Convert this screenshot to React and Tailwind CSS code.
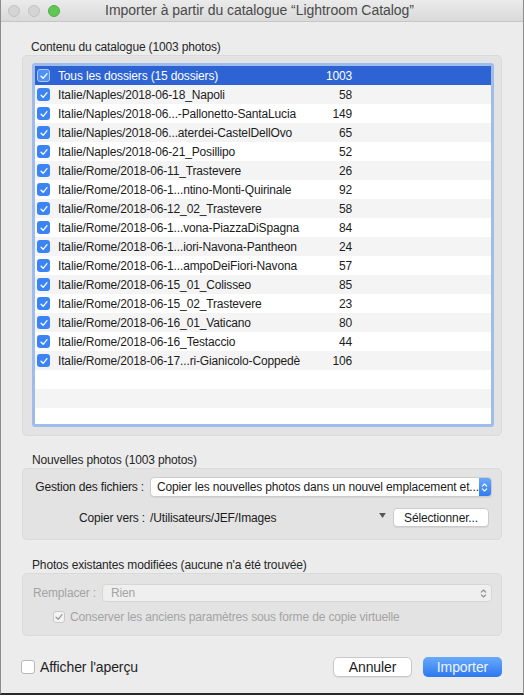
import React from 'react';

const rows = [
  ['Italie/Naples/2018-06-18_Napoli', 58],
  ['Italie/Naples/2018-06...-Pallonetto-SantaLucia', 149],
  ['Italie/Naples/2018-06...aterdei-CastelDellOvo', 65],
  ['Italie/Naples/2018-06-21_Posillipo', 52],
  ['Italie/Rome/2018-06-11_Trastevere', 26],
  ['Italie/Rome/2018-06-1...ntino-Monti-Quirinale', 92],
  ['Italie/Rome/2018-06-12_02_Trastevere', 58],
  ['Italie/Rome/2018-06-1...vona-PiazzaDiSpagna', 84],
  ['Italie/Rome/2018-06-1...iori-Navona-Pantheon', 24],
  ['Italie/Rome/2018-06-1...ampoDeiFiori-Navona', 57],
  ['Italie/Rome/2018-06-15_01_Colisseo', 85],
  ['Italie/Rome/2018-06-15_02_Trastevere', 23],
  ['Italie/Rome/2018-06-16_01_Vaticano', 80],
  ['Italie/Rome/2018-06-16_Testaccio', 44],
  ['Italie/Rome/2018-06-17...ri-Gianicolo-Coppedè', 106],
];

const Check = ({ color = 'white' }) => (
  <svg viewBox="0 0 12 12" className="w-[10px] h-[10px]">
    <path d="M2.5 6.3 L5 8.8 L9.6 3.2" fill="none" stroke={color} strokeWidth="1.6" strokeLinecap="round" strokeLinejoin="round" />
  </svg>
);

const RowBox = ({ selected }) => (
  <div
    className={`w-[13px] h-[13px] rounded-[3px] flex items-center justify-center shrink-0 ${
      selected ? 'bg-[#4e90f6] border border-[#a9c8fb]' : 'bg-[#3b84f6]'
    }`}
  >
    <Check />
  </div>
);

const Stepper = ({ color }) => (
  <svg viewBox="0 0 8 12" className="w-[7px] h-[11px]">
    <path d="M1.5 4.5 L4 2 L6.5 4.5 M1.5 7.5 L4 10 L6.5 7.5" fill="none" stroke={color} strokeWidth="1.3" strokeLinecap="round" strokeLinejoin="round" />
  </svg>
);

export default function App() {
  return (
    <div
      className="w-[524px] h-[697px] bg-white text-[12px] tracking-[-0.15px] text-[#1c1c1c]"
      style={{ fontFamily: '"Liberation Sans", Arial, sans-serif' }}
    >
      <div className="h-[695px] bg-[#ececec] border-l border-r border-[#8c8c8c] border-b-2 border-b-[#2a2a2a] flex flex-col">
        {/* title bar */}
        <div className="h-[22px] shrink-0 bg-gradient-to-b from-[#ebebeb] to-[#d9d9d9] border-b border-[#c6c6c6] flex items-center relative">
          <div className="flex items-center gap-[8px] pl-[7px]">
            <div className="w-[12px] h-[12px] rounded-full bg-[#d4d4d4] border border-[#c2c2c2]" />
            <div className="w-[12px] h-[12px] rounded-full bg-[#d4d4d4] border border-[#c2c2c2]" />
            <div className="w-[12px] h-[12px] rounded-full bg-[#62c655] border border-[#4fae44]" />
          </div>
          <div className="flex-1 text-center text-[14px] tracking-[-0.05px] text-[#4a4a4a] pr-[64px]">
            Importer à partir du catalogue “Lightroom Catalog”
          </div>
        </div>

        <div className="px-[21px]">
          {/* section 1 */}
          <div className="mt-[18px] h-[15px] leading-[15px] pl-[9px] text-[#262626]">Contenu du catalogue (1003 photos)</div>
          <div className="h-[381px] bg-[#e3e3e3] border border-[#dadada] rounded-[5px] pt-[7px] pl-[9px] pr-[7px]">
            <div className="h-[364px] border-[3px] border-[#9ebdec] rounded-[3px] bg-white overflow-hidden">
              <div className="h-[19px] bg-[#2d63d3] text-white flex items-center pl-[2px]">
                <RowBox selected />
                <span className="ml-[8px] w-[240px]">Tous les dossiers (15 dossiers)</span>
                <span className="w-[54px] text-right">1003</span>
              </div>
              {rows.map(([name, n], i) => (
                <div
                  key={name}
                  className={`h-[19px] flex items-center pl-[2px] ${i % 2 === 0 ? 'bg-[#f4f4f4]' : 'bg-white'}`}
                >
                  <RowBox />
                  <span className="ml-[8px] w-[240px] whitespace-nowrap">{name}</span>
                  <span className="w-[54px] text-right">{n}</span>
                </div>
              ))}
              <div className="h-[19px] bg-white" />
              <div className="h-[19px] bg-[#f4f4f4]" />
              <div className="h-[19px] bg-white" />
            </div>
          </div>

          {/* section 2 */}
          <div className="mt-[17px] h-[15px] leading-[15px] pl-[10px] text-[#262626]">Nouvelles photos (1003 photos)</div>
          <div className="h-[72px] bg-[#e3e3e3] border border-[#dadada] rounded-[5px] pt-[8px] pr-[9px]">
            <div className="flex items-center h-[20px]">
              <span className="w-[127px] text-right pr-[6px]">Gestion des fichiers :</span>
              <div className="flex-1 h-[20px] bg-white border border-[#cbcbcb] rounded-[4px] shadow-[0_1px_0_rgba(0,0,0,0.06)] flex items-center overflow-hidden">
                <span className="flex-1 pl-[6px] whitespace-nowrap">Copier les nouvelles photos dans un nouvel emplacement et...</span>
                <div className="w-[15px] h-full bg-gradient-to-b from-[#6aa8f9] to-[#2f7bf2] flex items-center justify-center">
                  <Stepper color="white" />
                </div>
              </div>
            </div>
            <div className="flex items-center h-[19px] mt-[11px]">
              <span className="w-[127px] text-right pr-[5px]">Copier vers :</span>
              <span className="flex-1">/Utilisateurs/JEF/Images</span>
              <svg viewBox="0 0 8 6" className="w-[7px] h-[5px] mr-[7px] mb-[4px]">
                <path d="M0 0 L8 0 L4 6 Z" fill="#555" />
              </svg>
              <div className="w-[96px] h-[19px] bg-white border border-[#cbcbcb] rounded-[4px] shadow-[0_1px_0_rgba(0,0,0,0.06)] flex items-center justify-center mr-[3px]">
                Sélectionner...
              </div>
            </div>
          </div>

          {/* section 3 */}
          <div className="mt-[18px] h-[15px] leading-[15px] pl-[10px] text-[#262626]">Photos existantes modifiées (aucune n'a été trouvée)</div>
          <div className="h-[63px] bg-[#e3e3e3] border border-[#dadada] rounded-[5px] pt-[10px] pr-[9px] text-[#a3a3a3]">
            <div className="flex items-center h-[18px]">
              <span className="w-[79px] text-right pr-[6px]">Remplacer :</span>
              <div className="flex-1 h-[18px] bg-[#efefef] border border-[#d6d6d6] rounded-[4px] flex items-center pr-[4px]">
                <span className="flex-1 pl-[8px]">Rien</span>
                <Stepper color="#8d8d8d" />
              </div>
            </div>
            <div className="flex items-center mt-[7px] pl-[30px] h-[16px]">
              <div className="w-[12px] h-[12px] rounded-[3px] bg-[#f3f3f3] border border-[#c9c9c9] flex items-center justify-center">
                <Check color="#9b9b9b" />
              </div>
              <span className="ml-[5px]">Conserver les anciens paramètres sous forme de copie virtuelle</span>
            </div>
          </div>

          {/* bottom */}
          <div className="mt-[21px] h-[20px] flex items-center text-[14px] tracking-[-0.1px]">
            <div className="w-[14px] h-[14px] rounded-[3px] bg-white border border-[#b9b9b9] -ml-[1px]" />
            <span className="ml-[5px] text-[#1f1f1f]">Afficher l'aperçu</span>
            <div className="flex-1" />
            <div className="w-[79px] h-[20px] bg-white border border-[#c8c8c8] rounded-[5px] shadow-[0_1px_0_rgba(0,0,0,0.06)] flex items-center justify-center">
              Annuler
            </div>
            <div className="w-[79px] h-[20px] ml-[11px] rounded-[5px] bg-gradient-to-b from-[#68a9f9] to-[#2b78f0] text-[#eef4ff] flex items-center justify-center">
              Importer
            </div>
          </div>
        </div>
      </div>
    </div>
  );
}
